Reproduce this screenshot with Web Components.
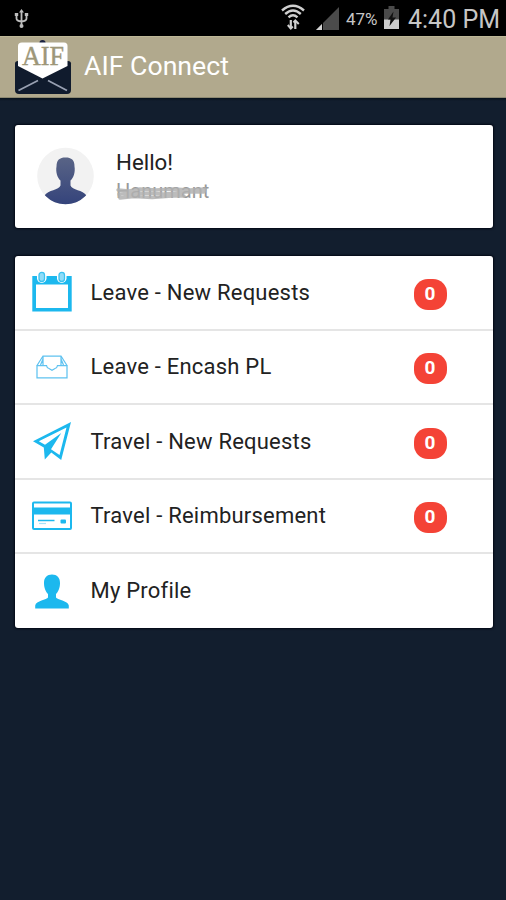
<!DOCTYPE html>
<html lang="en">
<head>
<meta charset="utf-8">
<title>AIF Connect</title>
<style>
  html, body {
    margin: 0;
    height: 100%;
    background: #121e2e;
  }
</style>
</head>
<body>
<aif-app></aif-app>

<script>

/**
 * ICONS
 */
const icons = {
  calendar: `
    <svg width="40" height="42" viewBox="0 0 40 42" fill="none">
      <path d="M0.300 5H39.700V40.500H0.300Z" fill="#1cb8ee"/>
      <path d="M4 13.500H36V37H4Z" fill="#fff"/>
      <rect x="5" y="0.500" width="9.500" height="11.500" rx="4.700" fill="#fff"/>
      <rect x="25" y="0.500" width="9.500" height="11.500" rx="4.700" fill="#fff"/>
      <rect x="7" y="1.300" width="5.500" height="9.200" rx="2.700" fill="#8fdcf8" stroke="#3cc2f0" stroke-width="1.300"/>
      <rect x="27" y="1.300" width="5.500" height="9.200" rx="2.700" fill="#8fdcf8" stroke="#3cc2f0" stroke-width="1.300"/>
    </svg>`,
  inbox: `
    <svg width="32" height="24" viewBox="0 0 32 24" fill="none" stroke="#5fc2f0" stroke-width="1.250">
      <path d="M1 10.500H10.500C10.800 12.500 11.500 13.200 13 13.500L16 15.200L19 13.500C20.500 13.200 21.200 12.500 21.500 10.500H31V22.800H1Z"/>
      <path d="M1 10.500L7 1H25L31 10.500M7 1V10M25 1V10M4.500 10L7 4M27.500 10L25 4"/>
    </svg>`,
  plane: `
    <svg width="40" height="40" viewBox="0 0 40 40" fill="#1cb8ee">
      <path fill-rule="evenodd" d="M39 1L29.200 39L19.300 31.600L12.800 38.600L11.800 26.400L1 20.300ZM34.500 6.500L6.800 20.300L13 23.800L29.300 12L19 28.300L27.500 34Z"/>
    </svg>`,
  card: `
    <svg width="40" height="30" viewBox="0 0 40 30">
      <rect x="1" y="1.500" width="38" height="26.500" rx="1" fill="#fff" stroke="#1cb8ee" stroke-width="2"/>
      <path d="M1 6.500H39V13.500H1Z" fill="#1cb8ee"/>
      <path d="M6 19.500H22.500" stroke="#1cb8ee" stroke-width="1.500"/>
      <path d="M7 22.500H14" stroke="#a6e2f8" stroke-width="1.200"/>
      <rect x="28.500" y="18.500" width="5.500" height="4" rx="1" fill="#1cb8ee"/>
    </svg>`,
  person: `
    <svg width="34" height="35" viewBox="0 0 34 35" fill="#1cb8ee">
      <path d="M17 0.500C22 0.500 25 3.500 25 9C25 14.500 23 18 21 20V23.500C22 26 33 26.500 33.800 31.500V34.500H0.200V31.500C1 26.500 12 26 13 23.500V20C11 18 9 14.500 9 9C9 3.500 12 0.500 17 0.500Z"/>
    </svg>`
};

/**
 * StatusBar
 *  - usb, wifi, signal, battery and clock
 */
class StatusBar extends HTMLElement {

  connectedCallback() {
    const shadowRoot = this.attachShadow({mode: 'open'});
    shadowRoot.innerHTML = `
      <style>
        :host {
          display: flex;
          align-items: flex-start;
          box-sizing: border-box;
          height: 36px;
          padding: 0 7px 0 14px;
          background: #000;
          color: #c6c6c6;
          font-family: Roboto, sans-serif;
          white-space: nowrap;
        }
        svg { display: block; flex: none; }
        .usb { margin-top: 9px; }
        .wifi { margin: 4px 0 0 auto; }
        .signal { margin: 7px 0 0 11px; }
        .percent {
          margin-left: 7px;
          font-size: 17px;
          line-height: 38px;
          width: 35px;
        }
        .battery { margin: 6px 0 0 3px; }
        .clock {
          margin-left: 9px;
          width: 91px;
          font-size: 25px;
          line-height: 39px;
        }
      </style>
      <svg class="usb" width="15" height="20" viewBox="0 0 15 20" fill="none" stroke="#bdbdbd" stroke-width="1.800">
        <path d="M7.500 2V18M2.500 5V9.500Q2.500 12 7.500 12.500Q12.500 12 12.500 9.500V5"/>
        <path d="M7.500 0L10 3.500H5Z" fill="#bdbdbd" stroke="none"/>
        <path d="M0.800 5.500H4.200M10.800 5.500H14.200" stroke-width="3"/>
        <circle cx="7.500" cy="17" r="2" fill="#bdbdbd" stroke="none"/>
      </svg>
      <svg class="wifi" width="24" height="27" viewBox="0 0 24 27" fill="none" stroke="#cfcfcf" stroke-width="2.400">
        <path d="M1 6.500Q12 -3 23 6.500M4.200 10Q12 3 19.800 10M7.500 13.300Q12 9.200 16.500 13.300"/>
        <path d="M9.800 16V24.500M14.300 17V25" stroke-width="2.200"/>
        <path d="M6.800 21L9.800 24.500L11.800 22.500M12.500 18.500L14.300 16.500L17.800 20" stroke-width="2"/>
      </svg>
      <svg class="signal" width="23" height="23" viewBox="0 0 23 23">
        <path d="M23 0V23H0Z" fill="#4b4b4b"/>
        <path d="M6 17V23H0Z" fill="#d4d4d4"/>
        <path d="M6.500 16V23" stroke="#000"/>
      </svg>
      <span class="percent">47%</span>
      <svg class="battery" width="15" height="23" viewBox="0 0 15 23">
        <path d="M4.500 0H10.500V3H15V23H0V3H4.500Z" fill="#4a4a4a"/>
        <path d="M0 13.500H15V23H0Z" fill="#cdcdcd"/>
        <path d="M9.500 5.500L4 13.500H6.500L5.500 20L12 11.500H8.500Z" fill="#111"/>
      </svg>
      <span class="clock">4:40 PM</span>
    `;
  }

}

customElements.define('aif-status-bar', StatusBar);

/**
 * AppHeader
 *  - envelope logo and the application title
 */
class AppHeader extends HTMLElement {

  connectedCallback() {
    const shadowRoot = this.attachShadow({mode: 'open'});
    shadowRoot.innerHTML = `
      <style>
        :host {
          display: flex;
          box-sizing: border-box;
          height: 62px;
          padding-left: 14px;
          background: #b1a98d;
          border-top: 1px solid #bdb797;
          border-bottom: 1px solid #8d8972;
          color: #fff;
          font: 26.700px/58px Roboto, sans-serif;
        }
        svg { margin-top: 3px; flex: none; }
        .title { margin-left: 12px; white-space: nowrap; }
      </style>
      <svg width="58" height="56" viewBox="0 0 58 56">
        <path d="M1 23.500Q1 21 4 21H54Q57 21 57 23.500V50Q57 54 53 54H5Q1 54 1 50Z" fill="#101b2d"/>
        <ellipse cx="28.500" cy="2.500" rx="3" ry="2.500" fill="#1b2240"/>
        <path d="M4 6Q4 2.500 8 2.500H50Q53.500 2.500 53.500 6V26L28.500 38.500L4 26Z" fill="#fff"/>
        <path d="M4.500 50.500L24 40.500M34 40.500L53 50.500" stroke="#98a0b2" stroke-width="1.800"/>
        <text x="8" y="24.500" textLength="42" lengthAdjust="spacingAndGlyphs" font-family="Liberation Serif, serif" font-size="28" fill="#9d9779" stroke="#9d9779" stroke-width=".4">AIF</text>
      </svg>
      <span class="title"><slot></slot></span>
    `;
  }

}

customElements.define('aif-header', AppHeader);

/**
 * CardPanel
 *  - white panel for slotted content
 */
class CardPanel extends HTMLElement {

  connectedCallback() {
    const shadowRoot = this.attachShadow({mode: 'open'});
    shadowRoot.innerHTML = `
      <style>
        :host {
          display: block;
          margin: 0 13.500px 0 14.500px;
          background: #fff;
          border-radius: 3px;
          box-shadow: 0 0 2px 1px #030915;
          overflow: hidden;
        }
      </style>
      <slot></slot>
    `;
  }

}

customElements.define('aif-card', CardPanel);

/**
 * UserGreeting
 *  - avatar, greeting and a masked user name
 */
class UserGreeting extends HTMLElement {

  connectedCallback() {
    const shadowRoot = this.attachShadow({mode: 'open'});
    shadowRoot.innerHTML = `
      <style>
        :host {
          display: flex;
          box-sizing: border-box;
          height: 103px;
          padding: 22px 0 0 22px;
          font-family: Roboto, sans-serif;
        }
        .avatar { flex: none; }
        .text { margin: 1px 0 0 22.500px; }
        .hello {
          font-size: 22.300px;
          line-height: 28px;
          color: #222;
        }
        .name {
          position: relative;
          width: max-content;
          font-size: 20px;
          line-height: 30px;
          color: #999;
        }
        .mask { position: absolute; left: 0; top: 8px; }
      </style>
      <svg class="avatar" width="57" height="58" viewBox="0 0 57 58">
        <defs>
          <clipPath id="round"><circle cx="28.500" cy="29" r="28.300"/></clipPath>
          <linearGradient id="shade" x2="0" y2="1"><stop stop-color="#596486"/><stop offset="1" stop-color="#34437b"/></linearGradient>
        </defs>
        <circle cx="28.500" cy="29" r="28.300" fill="#f2f2f2"/>
        <path clip-path="url(#round)" d="M28.500 10.500C34.500 10.500 37.500 13 37.500 19.500C38.500 25 36.500 31 33.500 33.500V38.500C35 43 46 43 49.500 48.500C44 54.500 37 58 28.500 58C20 58 13 54.500 7.500 48.500C11 43 22 43 23.500 38.500V33.500C20.500 31 18.500 25 19.500 19.500C19.500 13 22.500 10.500 28.500 10.500Z" fill="url(#shade)"/>
      </svg>
      <div class="text">
        <div class="hello">Hello!</div>
        <div class="name"><slot></slot>
          <svg class="mask" width="92" height="16" viewBox="0 0 92 16" fill="none" stroke-linejoin="round" stroke-linecap="round">
            <path d="M2 6L13 7L24 5L40 6L58 5L74 6L89 5L88 8L70 8L48 10L24 9L3 10L4 14L18 12.500L36 13.500L56 12L68 12" stroke="#b0b0b0" stroke-width="3.400" opacity=".85"/>
          </svg>
        </div>
      </div>
    `;
  }

}

customElements.define('aif-greeting', UserGreeting);

/**
 * MenuItem
 *  - icon, label and an optional count badge
 */
class MenuItem extends HTMLElement {

  connectedCallback() {
    const icon = this.getAttribute('icon');
    const count = this.getAttribute('count');

    const shadowRoot = this.attachShadow({mode: 'open'});
    shadowRoot.innerHTML = `
      <style>
        :host {
          display: flex;
          align-items: center;
          box-sizing: border-box;
          height: 74.500px;
          padding-right: 45px;
          border-bottom: 2px solid #e5e5e5;
          font-family: Roboto, sans-serif;
        }
        :host(:last-child) {
          height: 74px;
          border-bottom: none;
        }
        .icon {
          display: flex;
          justify-content: center;
          width: 75px;
          margin-right: 1px;
          flex: none;
        }
        .icon svg { display: block; }
        .label {
          flex: 1;
          font-size: 22px;
          letter-spacing: 0.220px;
          color: #222;
          white-space: nowrap;
        }
        :host(:last-child) .label {
          margin-top: -2px;
        }
        .badge {
          width: 33px;
          height: 31px;
          margin: 4px 1px 0 0;
          border-radius: 14px;
          background: #f44336;
          color: #fff;
          font-weight: 700;
          font-size: 19px;
          line-height: 30px;
          text-align: center;
        }
      </style>
      <span class="icon">${ icons[icon] }</span>
      <span class="label"><slot></slot></span>
      ${ count !== null ? `<span class="badge">${ count }</span>` : '' }
    `;
  }

}

customElements.define('aif-menu-item', MenuItem);

/**
 * App
 */
class App extends HTMLElement {

  connectedCallback() {
    const shadowRoot = this.attachShadow({mode: 'open'});
    shadowRoot.innerHTML = `
      <style>
        :host {
          display: flex;
          flex-direction: column;
          height: 900px;
          overflow: hidden;
          background: #121e2e;
        }
        main {
          display: flex;
          flex-direction: column;
          gap: 28px;
          padding-top: 27px;
          flex: 1;
          background: linear-gradient(#07111c, #121e2e 3px);
        }
      </style>
      <aif-status-bar></aif-status-bar>
      <aif-header>AIF Connect</aif-header>
      <main>
        <aif-card>
          <aif-greeting>Hanumant</aif-greeting>
        </aif-card>
        <aif-card>
          <aif-menu-item icon="calendar" count="0">Leave - New Requests</aif-menu-item>
          <aif-menu-item icon="inbox" count="0">Leave - Encash PL</aif-menu-item>
          <aif-menu-item icon="plane" count="0">Travel - New Requests</aif-menu-item>
          <aif-menu-item icon="card" count="0">Travel - Reimbursement</aif-menu-item>
          <aif-menu-item icon="person">My Profile</aif-menu-item>
        </aif-card>
      </main>
    `;
  }

}

customElements.define('aif-app', App);

</script>
</body>
</html>
